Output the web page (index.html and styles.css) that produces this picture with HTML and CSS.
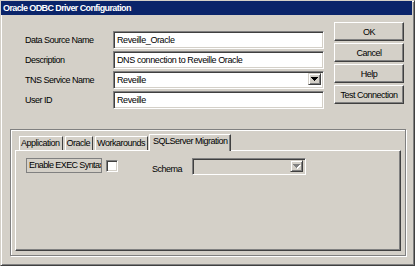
FILE: index.html
```html
<!DOCTYPE html>
<html lang="en">
<head>
    <meta charset="utf-8">
    <title>Oracle ODBC Driver Configuration</title>
    <link rel="stylesheet" href="styles.css">
</head>
<body>
    <div class="window">
        <div class="titlebar">Oracle ODBC Driver Configuration</div>

        <div class="top">
            <div class="fields">
                <label>Data Source Name</label>
                <div class="input">Reveille_Oracle</div>
                <label>Description</label>
                <div class="input">DNS connection to Reveille Oracle</div>
                <label>TNS Service Name</label>
                <div class="combo">
                    <span class="combo-text">Reveille</span>
                    <span class="drop">
                        <svg width="7" height="4" viewBox="0 0 7 4"><path d="M0 0h7v1h-1v1h-1v1h-1v1h-1v-1h-1v-1h-1v-1h-1z" fill="#000"/></svg>
                    </span>
                </div>
                <label>User ID</label>
                <div class="input">Reveille</div>
            </div>
            <div class="buttons">
                <button class="btn">OK</button>
                <button class="btn">Cancel</button>
                <button class="btn">Help</button>
                <button class="btn">Test Connection</button>
            </div>
        </div>

        <!-- property pages -->
        <div class="group">
            <div class="tabs">
                <div class="tab">Application</div>
                <div class="tab">Oracle</div>
                <div class="tab">Workarounds</div>
                <div class="tab active">SQLServer Migration</div>
            </div>
            <div class="panel">
                <div class="row">
                    <div class="static">Enable EXEC Syntax</div>
                    <div class="check"></div>
                    <span class="schema-label">Schema</span>
                    <div class="combo disabled">
                        <span class="combo-text"></span>
                        <span class="drop">
                            <svg width="8" height="5" viewBox="0 0 8 5"><path d="M1 1h7v1h-1v1h-1v1h-1v1h-1v-1h-1v-1h-1v-1h-1z" fill="#fff"/><path d="M0 0h7v1h-1v1h-1v1h-1v1h-1v-1h-1v-1h-1v-1h-1z" fill="#808080"/></svg>
                        </span>
                    </div>
                </div>
            </div>
        </div>
    </div>
</body>
</html>
```

FILE: styles.css
```css
body {
    margin: 0;
    background-color: #d4d0c8;
    font-family: "Liberation Sans", Arial, sans-serif;
    font-size: 9px;
    letter-spacing: -0.5px;
    color: #000000;
}
.window {
    width: 415px;
    height: 266px;
    box-sizing: border-box;
    background-color: #d4d0c8;
    border: 1px solid;
    border-color: #d4d0c8 #404040 #404040 #d4d0c8;
    box-shadow: inset 1px 1px #ffffff, inset -1px -1px #808080;
    padding-right: 2px;
}
.titlebar {
    height: 14px;
    line-height: 14px;
    background-color: #0a246a;
    color: #ffffff;
    font-weight: bold;
    font-size: 9px;
    letter-spacing: -0.6px;
    padding-left: 2px;
    white-space: nowrap;
}
.top {
    display: flex;
    padding: 7px 0 0 24px;
}
.fields {
    display: grid;
    grid-template-columns: 88px 211px;
    grid-auto-rows: 18px;
    row-gap: 2px;
    margin-top: 9px;
    align-items: center;
}
.input, .combo {
    height: 18px;
    box-sizing: border-box;
    background-color: #ffffff;
    border: 1px solid;
    border-color: #808080 #ffffff #ffffff #808080;
    box-shadow: inset 1px 1px #404040, inset -1px -1px #d4d0c8;
    padding: 2px 3px 0;
    white-space: nowrap;
    overflow: hidden;
    line-height: 13px;
    letter-spacing: -0.4px;
}
.combo {
    display: flex;
    padding: 2px 2px 2px 3px;
}
.combo-text {
    flex: 1;
}
.drop {
    width: 13px;
    height: 12px;
    box-sizing: border-box;
    background-color: #d4d0c8;
    border: 1px solid;
    border-color: #d4d0c8 #404040 #404040 #d4d0c8;
    box-shadow: inset 1px 1px #ffffff, inset -1px -1px #808080;
    display: flex;
    align-items: center;
    justify-content: center;
    margin-top: -1px;
}
.buttons {
    display: flex;
    flex-direction: column;
    gap: 2px;
    margin-left: 10px;
}
.btn {
    width: 70px;
    height: 19px;
    padding: 0;
    font-family: inherit;
    font-size: 9px;
    letter-spacing: -0.5px;
    background-color: #d4d0c8;
    border: 1px solid;
    border-color: #ffffff #404040 #404040 #ffffff;
    box-shadow: inset -1px -1px #808080;
    color: #000000;
    white-space: nowrap;
}
.group {
    width: 396px;
    height: 127px;
    box-sizing: border-box;
    margin: 20px 0 0 9px;
    border: 1px solid #808080;
    box-shadow: inset 1px 1px #ffffff, 1px 1px #ffffff;
    padding: 4px 0 0 4px;
}
.tabs {
    display: flex;
    align-items: flex-end;
    height: 16px;
    padding-left: 4px;
    gap: 2px;
}
.tab {
    height: 14px;
    line-height: 13px;
    box-sizing: border-box;
    padding: 0 2px 0 1px;
    border-left: 1px solid #ffffff;
    border-top: 1px solid #ffffff;
    border-right: 1px solid #404040;
    white-space: nowrap;
}
.tab.active {
    height: 17px;
    line-height: 13px;
    padding: 0 3px;
    margin-bottom: -1px;
    margin-left: -1px;
    background-color: #d4d0c8;
    box-shadow: inset -1px 0 #808080;
    position: relative;
}
.panel {
    width: 386px;
    height: 101px;
    box-sizing: border-box;
    border: 1px solid;
    border-color: #ffffff #404040 #404040 #ffffff;
    box-shadow: inset -1px -1px #808080;
    padding: 7px 0 0 10px;
}
.row {
    display: flex;
    align-items: center;
}
.static {
    width: 76px;
    height: 15px;
    box-sizing: border-box;
    border: 1px solid #808080;
    line-height: 13px;
    padding-left: 2px;
    letter-spacing: -0.6px;
    white-space: nowrap;
    overflow: hidden;
    margin-top: -2px;
}
.check {
    width: 12px;
    height: 12px;
    box-sizing: border-box;
    margin: -2px 0 0 4px;
    background-color: #ffffff;
    border: 1px solid;
    border-color: #808080 #ffffff #ffffff #808080;
    box-shadow: inset 1px 1px #404040, inset -1px -1px #d4d0c8;
}
.schema-label {
    margin: 5px 0 0 34px;
}
.combo.disabled {
    width: 114px;
    height: 17px;
    margin-left: 10px;
    background-color: #d4d0c8;
}
```
